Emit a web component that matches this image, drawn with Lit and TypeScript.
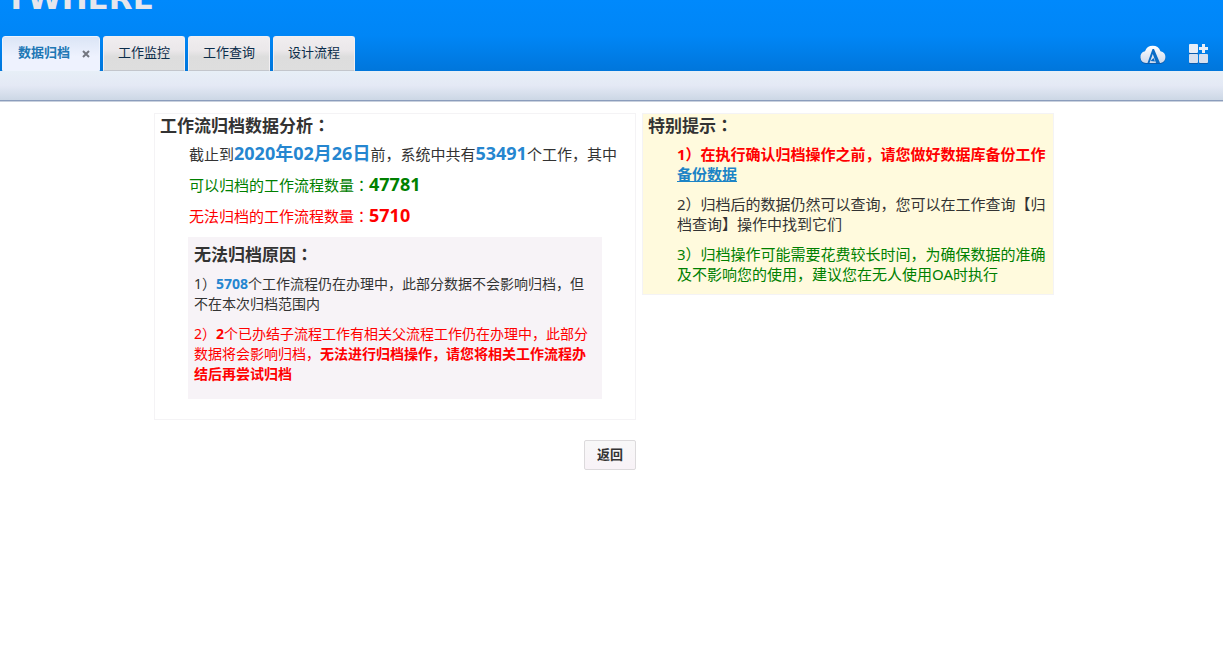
import { LitElement, html, css } from "lit";
import { customElement, state } from "lit/decorators.js";

@customElement("app-root")
export class AppRoot extends LitElement {
  static styles = css`
    :host {
      display: block;
      min-height: 100vh;
      background: #fff;
      color: #333;
      font-family: "Noto Sans", "Noto Sans CJK SC", sans-serif;
      font-size: 15px;
      line-height: 20px;
    }
    * {
      box-sizing: border-box;
    }
    h1,
    h2,
    p {
      margin: 0;
    }
    .header {
      display: flex;
      flex-direction: column;
      height: 71px;
      overflow: hidden;
      background: linear-gradient(#0089fc, #0086f6 50%, #0076db);
    }
    .brand {
      display: flex;
      align-items: flex-end;
      height: 36px;
      padding-left: 5px;
    }
    .logo {
      height: 38px;
      line-height: 0;
      font-family: "DejaVu Sans", sans-serif;
      font-size: 31px;
      font-weight: 700;
      color: #e6e6ec;
    }
    .bar {
      display: flex;
      justify-content: space-between;
      height: 35px;
    }
    .tabs {
      display: flex;
      gap: 3px;
      padding-left: 2px;
    }
    .tab {
      display: flex;
      align-items: center;
      padding: 0 14px 4px;
      border: 1px solid #f3f0f2;
      border-bottom: 1px solid #c3c6cc;
      border-radius: 3px 3px 0 0;
      background: linear-gradient(#f0edef, #ebe8ea 40%, #dddddd 60%, #dedede);
      color: #0b2c4a;
      font-family: "Noto Sans CJK SC", sans-serif;
      font-size: 13px;
      line-height: 20px;
      cursor: pointer;
    }
    .tab.active {
      gap: 12px;
      padding-left: 15px;
      padding-right: 9px;
      border-color: #eef3fd;
      background: linear-gradient(#dbe5f6, #eef2fe 60%);
      color: #2077b5;
      font-weight: 700;
    }
    .close {
      width: 8px;
      height: 8px;
      margin-top: 4px;
    }
    .tools {
      display: flex;
      gap: 20px;
      padding: 6px 13px 0 0;
    }
    .tool {
      display: block;
      height: 24px;
      padding: 0;
      border: 0;
      background: none;
      cursor: pointer;
    }
    .tool svg {
      display: block;
    }
    .subbar {
      height: 30px;
      border-bottom: 1px solid #8b9dbc;
      background: linear-gradient(#e7eff7, #e4e9f5 50%, #ccd7e5);
      box-shadow: 0 1px 0 #c9d1de;
    }
    .content {
      max-width: 915px;
      margin: 12px auto 0;
    }
    .panels {
      display: grid;
      grid-template-columns: 482fr 412fr;
      gap: 6px;
      align-items: start;
      padding-right: 15px;
    }
    .panel {
      border: 1px solid #f4f3f5;
    }
    .tips {
      background: #fffadd;
    }
    .title {
      padding-left: 5px;
      font-size: 17px;
      line-height: 23px;
      font-weight: 700;
    }
    .colon {
      font-family: "Noto Sans CJK JP", sans-serif;
      line-height: 1;
    }
    .summary {
      padding: 7px 0 20px 34px;
    }
    .stat {
      height: 21px;
      margin-bottom: 10px;
      line-height: 21px;
      white-space: nowrap;
    }
    .num {
      font-size: 18px;
      font-weight: 700;
      line-height: 1;
    }
    .blue {
      color: #2586d0;
    }
    .green {
      color: #008000;
    }
    .red {
      color: #ff0000;
    }
    .reasons {
      margin: 0 33px 0 -1px;
      padding: 6px 10px 5px 6px;
      background: #f7f3f7;
      font-size: 14px;
    }
    .reasons .title {
      margin-bottom: 8px;
      padding-left: 0;
    }
    .reasons p {
      margin-bottom: 10px;
    }
    .notes {
      padding: 7px 0 0 34px;
    }
    .notes p {
      margin-bottom: 10px;
      white-space: nowrap;
    }
    .link {
      color: #1c84c6;
      text-decoration: underline;
    }
    .actions {
      display: flex;
      justify-content: center;
      margin-top: 20px;
      padding-right: 3px;
    }
    .back {
      height: 30px;
      padding: 0 12px 3px;
      border: 1px solid #dcdadc;
      border-radius: 2px;
      background: linear-gradient(#f8f8f8, #f8f2f7);
      color: #333;
      font-family: "Noto Sans CJK SC", sans-serif;
      font-size: 13px;
      font-weight: 700;
      line-height: 20px;
      cursor: pointer;
    }
  `;

  @state() private active = 0;

  private tabs = ["数据归档", "工作监控", "工作查询", "设计流程"];

  private colon = html`<span class="colon">：</span>`;

  private renderTab(name: string, i: number) {
    const on = i === this.active;
    return html`<button
      class="tab ${on ? "active" : ""}"
      role="tab"
      aria-selected=${on ? "true" : "false"}
      @click=${() => (this.active = i)}
    >
      <span>${name}</span>${on
        ? html`<svg class="close" viewBox="0 0 8 8">
            <path d="M1 1L7 7M7 1L1 7" stroke="#737780" stroke-width="2" />
          </svg>`
        : ""}
    </button>`;
  }

  render() {
    return html`
      <header class="header">
        <div class="brand"><div class="logo">YWHERE</div></div>
        <div class="bar">
          <nav class="tabs" role="tablist">
            ${this.tabs.map((t, i) => this.renderTab(t, i))}
          </nav>
          <div class="tools">
            <button class="tool" aria-label="应用">
              <svg width="28" height="22" viewBox="0 0 28 22">
                <defs>
                  <linearGradient id="g1" x2="0" y2="1">
                    <stop offset="0" stop-color="#fff" />
                    <stop offset="1" stop-color="#cdd9ec" />
                  </linearGradient>
                </defs>
                <path
                  d="M6 20a6 6 0 0 1-1-11.800A8.300 8.300 0 0 1 20.500 8.200 6 6 0 0 1 20.500 20Z"
                  fill="#0a5cae"
                  transform="translate(0 1)"
                />
                <path
                  d="M6 20a6 6 0 0 1-1-11.800A8.300 8.300 0 0 1 20.500 8.200 6 6 0 0 1 20.500 20Z"
                  fill="url(#g1)"
                />
                <path d="M12.500 6H14L20 20H16L12.800 11 9.500 20H7.500Z" fill="#0a6cc6" />
                <path d="M10.500 18L13.500 15 15 18.500Z" fill="#0a6cc6" />
              </svg>
            </button>
            <button class="tool" aria-label="添加模块">
              <svg width="22" height="22" viewBox="0 0 22 22">
                <g fill="#0a5cae" transform="translate(0 1)">
                  <rect x="1" y="1" width="9" height="9" rx="1" />
                  <rect x="1" y="11" width="9" height="9" rx="1" />
                  <rect x="11" y="11" width="9" height="9" rx="1" />
                </g>
                <g fill="#e9eff8">
                  <rect x="1" y="1" width="9" height="9" rx="1" />
                  <path d="M14 1h3v3h3v3h-3v3h-3v-3h-3v-3h3z" />
                </g>
                <g fill="#d6e0ef">
                  <rect x="1" y="11" width="9" height="9" rx="1" />
                  <rect x="11" y="11" width="9" height="9" rx="1" />
                </g>
              </svg>
            </button>
          </div>
        </div>
      </header>
      <div class="subbar"></div>
      <main class="content">
        <div class="panels">
          <section class="panel">
            <h1 class="title">工作流归档数据分析${this.colon}</h1>
            <div class="summary">
              <p class="stat">截止到<span class="num blue">2020年02月26日</span>前，系统中共有<span class="num blue">53491</span>个工作，其中</p>
              <p class="stat green">可以归档的工作流程数量${this.colon}<span class="num">47781</span></p>
              <p class="stat red">无法归档的工作流程数量${this.colon}<span class="num">5710</span></p>
              <div class="reasons">
                <h2 class="title">无法归档原因${this.colon}</h2>
                <p>1）<b class="blue">5708</b>个工作流程仍在办理中，此部分数据不会影响归档，但<br />不在本次归档范围内</p>
                <p class="red">2）<b>2</b>个已办结子流程工作有相关父流程工作仍在办理中，此部分<br />数据将会影响归档，<b>无法进行归档操作，请您将相关工作流程办<br />结后再尝试归档</b></p>
              </div>
            </div>
          </section>
          <section class="panel tips">
            <h2 class="title">特别提示${this.colon}</h2>
            <div class="notes">
              <p class="red"><b>1）在执行确认归档操作之前，请您做好数据库备份工作<br /><a class="link" href="#backup">备份数据</a></b></p>
              <p>2）归档后的数据仍然可以查询，您可以在工作查询【归<br />档查询】操作中找到它们</p>
              <p class="green">3）归档操作可能需要花费较长时间，为确保数据的准确<br />及不影响您的使用，建议您在无人使用OA时执行</p>
            </div>
          </section>
        </div>
        <div class="actions"><button class="back">返回</button></div>
      </main>
    `;
  }
}
